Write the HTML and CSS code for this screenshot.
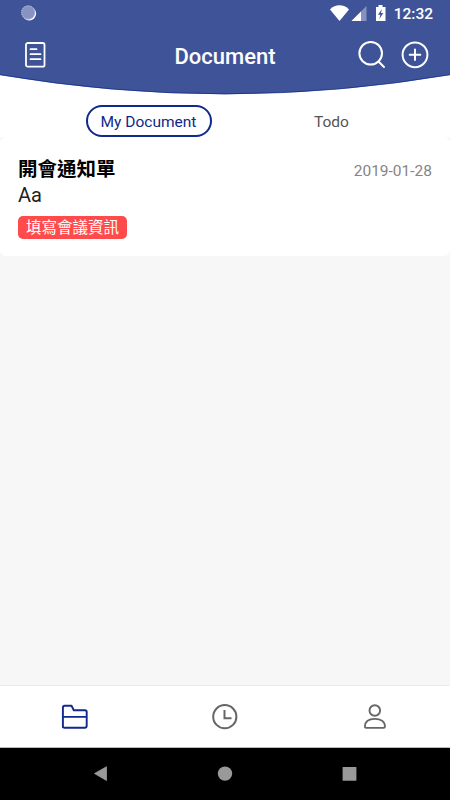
FILE: index.html
```html
<!DOCTYPE html>
<html lang="zh-Hant">
<head>
<meta charset="utf-8">
<title>Document</title>
<link rel="stylesheet" href="styles.css">
</head>
<body>
<div class="screen">
  <header class="top">
    <svg class="curve" viewBox="0 0 450 95"><path d="M0 0H450V75A1341 1341 0 0 1 0 75Z" fill="#3f5498"/><path d="M0 74.7A1341 1341 0 0 0 450 74.7" fill="none" stroke="#0b2b8c" stroke-width=".7"/></svg>
    <div class="status">
      <svg class="sync" width="18" height="18" viewBox="0 0 18 18"><circle cx="9.300" cy="9.600" r="6.800" fill="#fff"/><circle cx="8.200" cy="8.500" r="6.900" fill="#8794c1"/><circle cx="8.200" cy="8.500" r="6.600" fill="none" stroke="#c3cae0" stroke-dasharray="1 1"/></svg>
      <svg class="signals" width="58" height="20" viewBox="0 0 58 20">
        <path d="M0 5.4C5-.1 14-.1 19 5.4L9.500 17Z" fill="#fff"/>
        <path d="M36.500 2V17H21.500Z" fill="#8592c0"/><path d="M31 7.500V17H21.500Z" fill="#fff"/>
        <path d="M48.500 1H52.500V3H55.500V17H46V3H48.500Z" fill="#fff"/><path d="M51.800 5L48 10.800H50.300L49.400 15L53.300 9H51Z" fill="#3f5498"/>
      </svg>
      <span class="time">12:32</span>
    </div>
    <div class="bar">
      <svg class="doc" width="22" height="26" viewBox="0 0 22 26" fill="none" stroke="#fff" stroke-width="1.800" stroke-linecap="round"><rect x="2" y="1" width="18.500" height="23.700" rx="1.800"/><path d="M6.500 7.200H12.500M6.500 12.200H16.500M6.500 17.200H16.500"/></svg>
      <h1>Document</h1>
      <div class="actions">
        <svg width="28" height="28" viewBox="0 0 28 28" fill="none" stroke="#fff" stroke-width="2" stroke-linecap="round"><circle cx="12.700" cy="12.300" r="11.300"/><path d="M20.500 20.500L26 26"/></svg>
        <svg width="28" height="28" viewBox="0 0 28 28" fill="none" stroke="#fff" stroke-width="2" stroke-linecap="round"><circle cx="14" cy="13.800" r="12.400"/><path d="M8.700 13.800H19.300M14 8.500V19.100"/></svg>
      </div>
    </div>
  </header>
  <nav class="tabs">
    <span class="tab active">My Document</span>
    <span class="tab">Todo</span>
  </nav>
  <main class="list">
    <article class="card">
      <div class="row"><h2>開會通知單</h2><time>2019-01-28</time></div>
      <p>Aa</p>
      <span class="tag">填寫會議資訊</span>
    </article>
  </main>
  <footer class="bottom">
    <div><svg width="28" height="28" viewBox="0 0 28 28" fill="none" stroke="#10298a" stroke-width="1.900" stroke-linejoin="round"><path d="M1.900 24.200V4.500Q1.900 2.800 3.600 2.800H10.500L12.800 7.300H24Q25.700 7.300 25.700 9V22.800Q25.700 24.800 23.800 24.800H3.700Q1.900 24.800 1.900 23ZM1.900 13.900H25.700"/></svg></div>
    <div><svg width="28" height="28" viewBox="0 0 28 28" fill="none" stroke="#666" stroke-width="2"><circle cx="13.800" cy="13.700" r="11.600"/><path d="M13.500 7V15.200H20.500"/></svg></div>
    <div><svg width="28" height="28" viewBox="0 0 28 28" fill="none" stroke="#666" stroke-width="1.900" stroke-linejoin="round"><circle cx="13.800" cy="7.500" r="5.300"/><path d="M5.200 24.900Q3.900 24.900 3.900 23.700C3.900 18.500 8 15.900 13.800 15.900S23.900 18.500 23.900 23.700Q23.900 24.900 22.700 24.900Z"/></svg></div>
  </footer>
  <div class="system">
    <svg width="16" height="16" viewBox="0 0 16 16" fill="#999"><path d="M1.500 7.500L13.500 .7V14.500Z" stroke="#999" stroke-width=".8" stroke-linejoin="round"/></svg>
    <svg width="16" height="16" viewBox="0 0 16 16" fill="#999"><circle cx="8" cy="7.600" r="7.200"/></svg>
    <svg width="16" height="16" viewBox="0 0 16 16" fill="#999"><rect x=".6" y="1" width="13.800" height="13.800" rx=".6"/></svg>
  </div>
</div>
</body>
</html>
```
FILE: styles.css
```css
* { box-sizing: border-box; }
body { margin: 0; font-family: Roboto, "Noto Sans CJK TC", sans-serif; }
h1, h2, p { margin: 0; }
svg { display: block; flex: none; }
.screen { display: flex; flex-direction: column; width: 450px; height: 800px; overflow: hidden; background: #f7f7f7; }
.top { position: relative; height: 95px; flex: none; background: #fff; }
.curve { position: absolute; left: 0; top: 0; width: 450px; height: 95px; }
.status, .bar { position: relative; display: flex; color: #fff; }
.status { height: 28px; padding: 4px 17px 0 20px; justify-content: space-between; }
.sync { margin-right: auto; }
.time { margin-left: 6px; font-size: 15.500px; line-height: 20px; font-weight: 500; }
.bar { height: 54px; padding: 0 21px 0 24px; align-items: center; justify-content: space-between; }
.bar h1 { padding: 3px 0 0 46px; font-size: 22px; line-height: 28px; font-weight: 500; }
.actions { display: flex; gap: 15px; }
.tabs { display: grid; grid-template-columns: 183px 183px; justify-items: center; align-items: start; height: 42px; flex: none; padding: 10px 0 0 57px; background: #fff; }
.tab { padding: 7px 0 0; font-size: 15.500px; line-height: 20px; color: #555; }
.tab.active { width: 126px; height: 32px; padding: 0; border: 2px solid #10298a; border-radius: 16px; line-height: 30px; text-align: center; color: #10298a; }
.list { flex: 1; }
.card { height: 119px; padding: 18px 18px 0; background: #fff; border-radius: 6px; }
.row { display: flex; justify-content: space-between; align-items: center; height: 27px; }
.row h2 { padding-top: 2px; font-size: 19.500px; line-height: 28px; font-weight: 700; color: #000; }
.row time { font-size: 15.500px; line-height: 20px; color: #858585; padding-top: 4px; }
.card p { font-size: 20px; line-height: 26px; color: #222; }
.tag { display: block; width: 109px; height: 23px; margin-top: 8px; border-radius: 5px; background: #ff4b4b; color: #fff; font-size: 15.500px; line-height: 25px; text-align: center; }
.bottom { display: grid; grid-template-columns: repeat(3, 1fr); justify-items: center; height: 63px; flex: none; padding-top: 17px; border-top: 1px solid #ebebeb; border-bottom: 1px solid #bbb; background: #fff; }
.system { display: flex; justify-content: center; gap: 108.500px; height: 52px; flex: none; padding-top: 18px; background: #000; }
```
